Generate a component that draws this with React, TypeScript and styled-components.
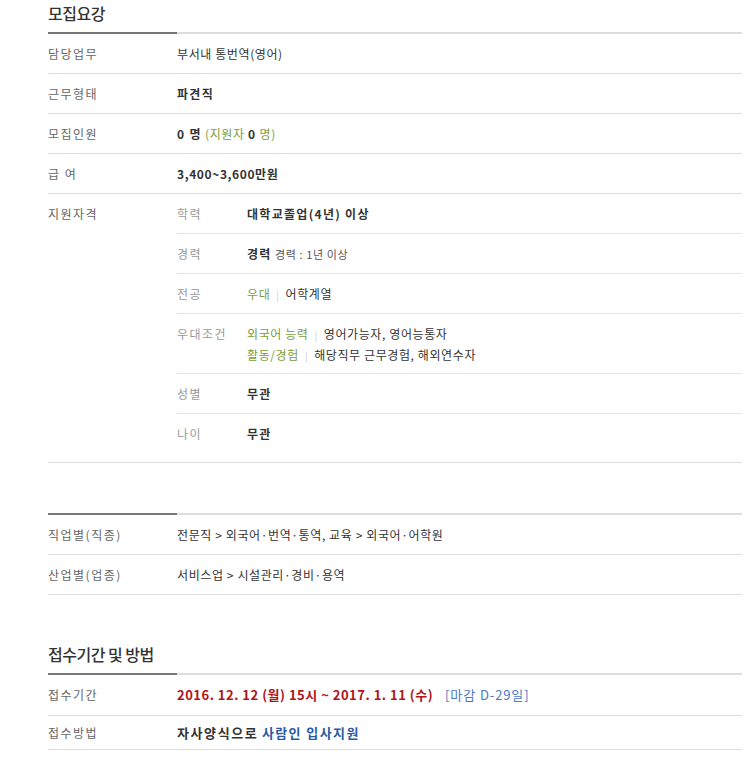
import styled, { createGlobalStyle } from "styled-components"

const GlobalStyle = createGlobalStyle`
  body {
    margin: 0;
    background: #fff;
    font-family: "Noto Sans CJK KR", "Noto Sans", sans-serif;
    font-size: 12px;
    color: #333;
  }
  * { box-sizing: border-box; }
`

const Page = styled.div`
  margin: 0 6px 0 48px;
`
const Heading = styled.h2<{ $top?: number }>`
  margin: ${p => p.$top || 0}px 0 0;
  height: 32px;
  line-height: 26px;
  font-size: 16px;
  font-weight: 500;
  letter-spacing: -0.5px;
  color: #333;
`
const Bar = styled.div<{ $top?: number }>`
  display: flex;
  height: 2px;
  margin-top: ${p => p.$top || 0}px;
`
const BarDark = styled.div`
  width: 129px;
  background: #777;
`
const BarLight = styled.div`
  flex: 1;
  background: #ddd;
`
const Row = styled.div<{ $h?: number; $pad?: number }>`
  display: flex;
  border-bottom: 1px solid #ddd;
  height: ${p => (p.$h ? `${p.$h}px` : "auto")};
  padding-bottom: ${p => p.$pad || 0}px;
`
const Label = styled.div<{ $h?: number }>`
  width: 129px;
  flex: none;
  line-height: ${p => p.$h || 39}px;
  color: #666;
  letter-spacing: 1.5px;
`
const Value = styled.div<{ $h?: number; $big?: boolean }>`
  flex: 1;
  line-height: ${p => p.$h || 39}px;
  color: #333;
  letter-spacing: 0.6px;
  font-size: ${p => (p.$big ? "13px" : "12px")};
  white-space: nowrap;
`
const SubList = styled.div`
  flex: 1;
  display: flex;
  flex-direction: column;
`
const SubRow = styled.div<{ $last?: boolean; $multi?: boolean }>`
  display: flex;
  height: ${p => (p.$multi ? 60 : p.$last ? 39 : 40)}px;
  border-bottom: ${p => (p.$last ? "none" : "1px solid #e4e4e4")};
`
const SubLabel = styled.div`
  width: 70px;
  flex: none;
  line-height: 39px;
  color: #999;
  letter-spacing: 1.5px;
`
const SubValue = styled.div<{ $multi?: boolean }>`
  flex: 1;
  line-height: ${p => (p.$multi ? "20px" : "39px")};
  padding: ${p => (p.$multi ? "10px 0 9px" : "0")};
  letter-spacing: 0.6px;
`
const Strong = styled.b<{ $tight?: boolean }>`
  font-weight: bold;
  color: #333;
  letter-spacing: ${p => (p.$tight ? "0.6px" : "1.3px")};
`
const Wide = styled.b`
  font-weight: bold;
  color: #333;
  letter-spacing: 1.6px;
`
const Small = styled.span`
  font-size: 11px;
  color: #555;
`
const Green = styled.span`
  color: #7a9c3c;
`
const Pipe = styled.span`
  color: #ccc;
  margin: 0 6px;
  font-size: 10px;
`
const Red = styled.span`
  color: #b0141a;
  font-weight: bold;
  letter-spacing: 0.5px;
  margin-right: 12px;
`
const Blue = styled.span<{ $bold?: boolean }>`
  color: ${p => (p.$bold ? "#2a5aa6" : "#4a7ac4")};
  font-weight: ${p => (p.$bold ? "bold" : "normal")};
  letter-spacing: ${p => (p.$bold ? "1.4px" : "0.9px")};
`

const quals = [
  { k: "학력", v: <Strong>대학교졸업(4년) 이상</Strong> },
  { k: "경력", v: <><Strong>경력</Strong> <Small>경력 : 1년 이상</Small></> },
  { k: "전공", v: <><Green>우대</Green><Pipe>|</Pipe>어학계열</> },
  {
    k: "우대조건",
    multi: true,
    v: (
      <>
        <div><Green>외국어 능력</Green><Pipe>|</Pipe>영어가능자, 영어능통자</div>
        <div><Green>활동/경험</Green><Pipe>|</Pipe>해당직무 근무경험, 해외연수자</div>
      </>
    ),
  },
  { k: "성별", v: <Strong>무관</Strong> },
  { k: "나이", v: <Strong>무관</Strong> },
]

export default function App() {
  return (
    <Page>
      <GlobalStyle />
      <Heading>모집요강</Heading>
      <Bar><BarDark /><BarLight /></Bar>
      <Row $h={40}><Label>담당업무</Label><Value>부서내 통번역(영어)</Value></Row>
      <Row $h={40}><Label>근무형태</Label><Value><Strong>파견직</Strong></Value></Row>
      <Row $h={40}>
        <Label>모집인원</Label>
        <Value>
          <Strong>0 명</Strong> <Green>(지원자 <Strong>0</Strong> 명)</Green>
        </Value>
      </Row>
      <Row $h={40}><Label>급 여</Label><Value><Strong $tight>3,400~3,600만원</Strong></Value></Row>
      <Row $pad={9}>
        <Label>지원자격</Label>
        <SubList>
          {quals.map((q, i) => (
            <SubRow key={q.k} $last={i === quals.length - 1} $multi={q.multi}>
              <SubLabel>{q.k}</SubLabel>
              <SubValue $multi={q.multi}>{q.v}</SubValue>
            </SubRow>
          ))}
        </SubList>
      </Row>

      <Bar $top={50}><BarDark /><BarLight /></Bar>
      <Row $h={40}><Label>직업별(직종)</Label><Value>전문직 &gt; 외국어·번역·통역, 교육 &gt; 외국어·어학원</Value></Row>
      <Row $h={40}><Label>산업별(업종)</Label><Value>서비스업 &gt; 시설관리·경비·용역</Value></Row>

      <Heading $top={46}>접수기간 및 방법</Heading>
      <Bar><BarDark /><BarLight /></Bar>
      <Row $h={41}>
        <Label $h={40}>접수기간</Label>
        <Value $h={40} $big>
          <Red>2016. 12. 12 (월) 15시 ~ 2017. 1. 11 (수)</Red>
          <Blue>[마감 D-29일]</Blue>
        </Value>
      </Row>
      <Row $h={34}>
        <Label $h={33}>접수방법</Label>
        <Value $h={33} $big>
          <Wide>자사양식으로</Wide> <Blue $bold>사람인 입사지원</Blue>
        </Value>
      </Row>
    </Page>
  )
}
